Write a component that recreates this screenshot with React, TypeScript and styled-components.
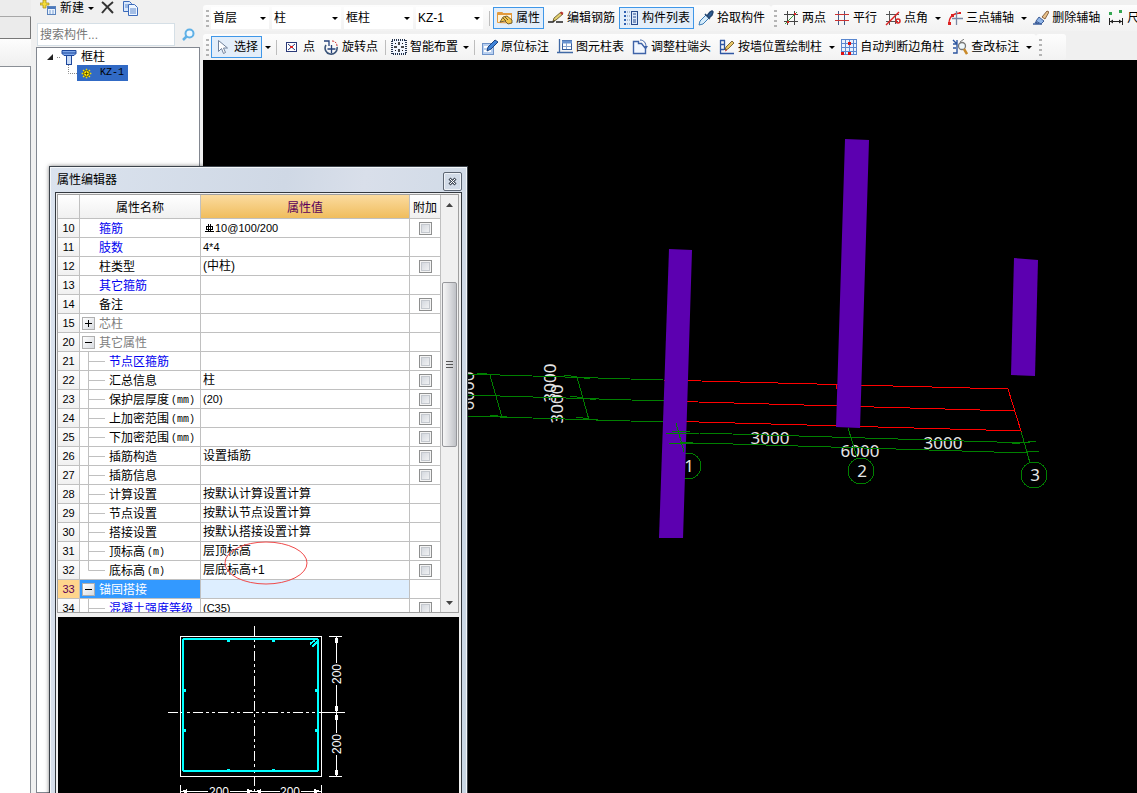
import React, { useState } from "react";
import styled, { createGlobalStyle, css } from "styled-components";

const Global = createGlobalStyle`
  * { box-sizing: border-box; }
  body { margin: 0; background: #f0f0f0; }
  button, input, select {
    font: inherit; color: inherit; margin: 0; padding: 0; border: 0; background: none;
  }
`;

/* ---------- page frame ---------- */

const Page = styled.div`
  position: relative;
  display: flex;
  height: 100vh;
  min-height: 600px;
  overflow: hidden;
  background: #f0f0f0;
  color: #000;
  font: 12px/16px "Liberation Sans", "Noto Sans CJK SC", sans-serif;
`;

const Dock = styled.div`
  display: flex;
  flex-direction: column;
  flex: none;
  width: 31px;
  margin-right: 5px;
`;

const DockTop = styled.div`
  height: 17px;
  background: #ececec;
  border-bottom: 1px solid #a8a8a8;
`;

const DockTab = styled.div`
  height: 22px;
  background: #ebebeb;
  border: solid #777;
  border-width: 0 1px 1px 0;
`;

const DockBar = styled.div`
  height: 28px;
  background: linear-gradient(#fdfdfd, #efefef);
  border-bottom: 1px solid #8a8f96;
`;

const DockBody = styled.div`
  flex: 1;
  background: #fff;
  border-right: 1px solid #8a8f96;
`;

const Sidebar = styled.aside`
  display: flex;
  flex-direction: column;
  flex: none;
  width: 164px;
  margin-right: 3px;
`;

const SideTools = styled.div`
  display: flex;
  align-items: center;
  height: 22px;
  padding: 0 4px 6px;
`;

const SideButton = styled.button`
  display: flex;
  align-items: center;
  gap: 4px;
  height: 16px;
  margin-right: 6px;
`;

const SearchRow = styled.form`
  display: flex;
  align-items: center;
  height: 25px;
  padding-left: 1px;
`;

const SearchInput = styled.input`
  flex: 1;
  min-width: 0;
  height: 23px;
  padding: 0 2px;
  background: #fff;
  border: 1px solid #d5dfe6;
  &::placeholder { color: #777; opacity: 1; }
`;

const SearchButton = styled.button`
  display: flex;
  align-items: center;
  justify-content: center;
  width: 25px;
  height: 23px;
`;

const Tree = styled.ul`
  flex: 1;
  margin: 0;
  padding: 1px 0 0 10px;
  list-style: none;
  background: #fff;
  border: 1px solid #828790;
`;

const TreeRow = styled.li<{ $child?: boolean }>`
  display: flex;
  align-items: center;
  height: 16px;
  padding-left: ${(p) => (p.$child ? 20 : 0)}px;
`;

const TreeLabel = styled.span`
  margin-left: 4px;
`;

const TreeSelected = styled.span`
  display: flex;
  align-items: center;
  gap: 8px;
  height: 16px;
  padding: 0 4px;
  background: #316ac5;
  font: 10px/16px "Liberation Mono", monospace;
`;

/* ---------- toolbars ---------- */

const Main = styled.main`
  display: flex;
  flex-direction: column;
  flex: 1;
  min-width: 0;
`;

const Toolbars = styled.div`
  display: flex;
  flex-direction: column;
  gap: 3px;
  height: 60px;
  padding-top: 5px;
  overflow: hidden;
`;

const Bar = styled.div`
  display: flex;
  height: 26px;
`;

const Group = styled.div<{ $fill?: boolean }>`
  display: flex;
  align-items: center;
  flex: ${(p) => (p.$fill ? "1 0 auto" : "none")};
  padding: 0 2px 0 1px;
  border-radius: 3px;
  background: linear-gradient(#fdfdfd, #f2f2f2);
`;

const EmptyGroup = styled.span`
  width: 20px;
`;

const Grip = styled.span`
  flex: none;
  width: 3px;
  height: 17px;
  margin: 0 2px;
  background: repeating-linear-gradient(#b4b4b4 0 2px, transparent 2px 5px);
`;

const Separator = styled.span`
  flex: none;
  width: 1px;
  height: 15px;
  margin: 0 3px;
  background: #bdbdbd;
`;

const ComboBox = styled.label<{ $width: number }>`
  display: flex;
  align-items: center;
  width: ${(p) => p.$width}px;
  height: 22px;
  margin-right: 3px;
  padding: 0 3px 0 2px;
  background: #fff;
`;

const ComboSelect = styled.select`
  flex: 1;
  min-width: 0;
  appearance: none;
  outline: 0;
`;

const Tool = styled.button<{ $active?: boolean; $tight?: boolean }>`
  display: flex;
  align-items: center;
  gap: 3px;
  flex: none;
  height: 22px;
  padding: 0 ${(p) => (p.$tight ? 1 : 3)}px;
  border: 1px solid transparent;
  white-space: nowrap;
  ${(p) =>
    p.$active &&
    css`
      border-color: #3f97e8;
      background: #e3eefa;
    `}
`;

const MenuArrow = styled.button`
  display: flex;
  align-items: center;
  justify-content: center;
  flex: none;
  width: 11px;
  height: 22px;
`;

const Caret = () => (
  <svg width="6" height="3" viewBox="0 0 6 3" aria-hidden="true">
    <path d="M0 0h6L3 3z" fill="#000" />
  </svg>
);

/* ---------- icons ---------- */

const shapes: Record<string, React.ReactNode> = {
  newItem: (
    <>
      <path d="M3 0h3v3h3v2H6v3H3V5H0V3h3z" fill="#f4dc3c" stroke="#a58a12" strokeWidth=".7" />
      <rect x="7.500" y="6.500" width="8" height="8" fill="#e9f2fd" stroke="#5a83bd" />
      <path d="M8 8h7" stroke="#4c79bd" strokeWidth="2" />
      <path d="M9 11h6M9 13h6" stroke="#7fa2d4" strokeDasharray="2 1" />
    </>
  ),
  remove: <path d="M2 2c4 3 8 8 11 11M13 2C9 5 5 9 2 13" stroke="#333" strokeWidth="2" fill="none" />,
  copy: (
    <>
      <path d="M1.500 1.500h6l2 2v8h-8z" fill="#d9e8fb" stroke="#3c6bbb" />
      <path d="M6.500 4.500h6l3 3v8h-9z" fill="#edf5ff" stroke="#3c6bbb" />
      <path d="M8 9h6M8 11h6M8 13h6M3 5h3M3 7h3" stroke="#5a86cb" />
    </>
  ),
  search: (
    <>
      <circle cx="9.500" cy="6.500" r="4" fill="#eef8ff" stroke="#5fb0e6" strokeWidth="2" />
      <path d="M6.500 9.500L3 13" stroke="#5fb0e6" strokeWidth="2.500" />
    </>
  ),
  column: (
    <>
      <path d="M1 1.500h14v3l-2 2H3l-2-2z" fill="#7da7ea" stroke="#1d479c" />
      <path d="M1 4h14" stroke="#1d479c" />
      <rect x="5.500" y="6.500" width="5" height="9" fill="#c9dcf8" stroke="#1d479c" />
    </>
  ),
  gear: (
    <>
      <path d="M8 1v14M1 8h14M3 3l10 10M13 3L3 13" stroke="#ffe600" strokeWidth="2" />
      <circle cx="8" cy="8" r="4.500" fill="#ffe600" stroke="#3a3000" />
      <path d="M8 5v6M5 8h6" stroke="#3a3000" />
    </>
  ),
  property: (
    <>
      <path d="M.500 12.500v-10h5l1 1.500h8v9z" fill="#fff3d9" stroke="#e39a3d" />
      <path d="M1 4h14" stroke="#e39a3d" strokeWidth="2" />
      <path d="M3 12l3-5 4-1 5 4v3l-4 1-3-3z" fill="#f3c64d" stroke="#54421a" strokeWidth=".8" />
      <path d="M6 8l3 3M8 7l3 3" stroke="#54421a" strokeWidth=".8" />
    </>
  ),
  pencilBar: (
    <>
      <path d="M0 12h5l2-2M8 12h7" stroke="#222" strokeWidth="1.500" fill="none" />
      <path d="M5 11l1-3 7-6 2 2-7 6z" fill="#e2cf6f" stroke="#5b4b20" strokeWidth=".8" />
      <path d="M12 3l1.500-1.500L15.500 3 14 5z" fill="#b33" />
    </>
  ),
  list: (
    <>
      <path d="M1 2h2M1 6h2M1 10h2M1 14h2" stroke="#2f5fb0" strokeWidth="2" />
      <path d="M4 2h3M4 6h3M4 10h3M4 14h3" stroke="#7a8ba6" strokeDasharray="1 1" />
      <rect x="8.500" y="1.500" width="6" height="13" fill="#dbe8fa" stroke="#274b8e" />
      <path d="M10 4h3M10 7h3M10 10h3M10 12h3" stroke="#274b8e" />
    </>
  ),
  dropper: (
    <>
      <path d="M1 15l1-4 6-6 3 3-6 6z" fill="#d6ecfb" stroke="#3c7cb5" />
      <path d="M7 4l5 5M9 6l3-4 2-1 1 1-1 3-3 3z" fill="#2f6299" stroke="#24456f" strokeWidth="1.500" />
    </>
  ),
  twoPoint: (
    <>
      <path d="M4.500 1v14M11.500 1v14M1 4.500h14M1 11.500h14" stroke="#444" />
      <path d="M2 14L14 2" stroke="#3aa03a" />
      <path d="M11 3h2v2h-2zM4 11h2v2H4z" fill="#d22" />
    </>
  ),
  parallel: (
    <>
      <path d="M4.500 1v14M10.500 1v14" stroke="#455a86" />
      <path d="M1 4.500h14M1 10.500h14" stroke="#c33" strokeWidth="1.200" />
    </>
  ),
  pointAngle: (
    <>
      <path d="M4.500 1v14M1 4.500h13M1 11.500h12M10.500 6v8" stroke="#555" />
      <path d="M1 15L14 2" stroke="#d22" strokeWidth="1.400" />
      <circle cx="13" cy="11" r="2" fill="none" stroke="#d22" strokeWidth="1.500" />
    </>
  ),
  threePoint: (
    <>
      <path d="M2 14C2 7 6 3 14 3" stroke="#d22" fill="none" strokeWidth="1.300" />
      <path d="M9.500 1v14M5 8.500h11" stroke="#7a87a3" strokeWidth="1.300" />
      <path d="M1 12h3v3H1zM4 4h3v3H4zM12 2h2v2h-2z" fill="#d22" />
    </>
  ),
  brush: (
    <>
      <path d="M9 7l5-6 2 1-4 7z" fill="#e9c28b" stroke="#6d4420" strokeWidth=".8" />
      <path d="M6 7l5 4-3 3-5-3z" fill="#8fb5e8" stroke="#1d3f7c" strokeWidth=".8" />
      <path d="M0 14h9M2 12l4 2" stroke="#3c5f9c" strokeWidth="1.500" />
    </>
  ),
  measure: (
    <>
      <path d="M1 2h3v3H1zM11 0h3v3h-3z" fill="#34a853" />
      <path d="M1.500 8v7M14.500 8v7M2 11.500h12" stroke="#222" />
      <path d="M2 11.500l3-2v4zM14 11.500l-3-2v4z" fill="#222" />
    </>
  ),
  cursor: <path d="M3.500 1.500v11l3-3 2 5 2-1-2-4.500h4z" fill="#fff" stroke="#70819b" />,
  point: (
    <>
      <rect x="2.500" y="3.500" width="10" height="9" fill="#fff" stroke="#2b3a78" />
      <path d="M4 5l7 6M11 5l-7 6" stroke="#2b3a78" />
      <path d="M6 7h3v2H6z" fill="#d22" />
    </>
  ),
  rotate: (
    <>
      <path d="M3 6a6 6 0 1 0 11 2" stroke="#3b5479" strokeWidth="1.600" fill="none" />
      <path d="M1 2h5v5M8.500 6v8M4.500 10h8" stroke="#24407a" strokeWidth="1.300" fill="none" />
      <path d="M9 2c3 0 5 2 5 5" stroke="#c33" strokeDasharray="2 1" fill="none" />
    </>
  ),
  smart: (
    <>
      <rect x="1" y="1" width="14" height="14" fill="#f1f6ff" stroke="#24344f" strokeWidth="2" strokeDasharray="1 1" />
      <path d="M8 3v3M8 10v3M3 8h3M10 8h3" stroke="#111" strokeWidth="1.500" />
      <path d="M4 4h1v1H4zM11 4h1v1h-1zM4 11h1v1H4zM11 11h1v1h-1z" fill="#111" />
    </>
  ),
  note: (
    <>
      <rect x=".500" y="4.500" width="11" height="11" fill="#b9d0f0" stroke="#6f93c8" />
      <path d="M2 8h4M2 12h7" stroke="#fff" strokeWidth="2" />
      <path d="M5 12l1-4 7-7 3 2-7 7z" fill="#3f83d8" stroke="#1c427f" />
    </>
  ),
  chart: (
    <>
      <path d="M2.500 0v13M0 13.500h16" stroke="#4069a5" strokeWidth="1.300" />
      <rect x="5.500" y="1.500" width="9" height="9" fill="#fff" stroke="#385f9c" />
      <path d="M5 3h10" stroke="#6a94d0" strokeWidth="3" />
      <path d="M6 7.500h8M9.500 4v6" stroke="#8aa5cf" />
    </>
  ),
  adjust: (
    <>
      <path d="M1.500 2.500v12h12v-5l-4-5h-3v-2z" fill="#f2f7ff" stroke="#3f63a8" strokeWidth="1.400" />
      <path d="M8 1c4 0 6 3 6 7" stroke="#3f63a8" fill="none" />
      <path d="M12 7h4l-2 3z" fill="#3f63a8" />
    </>
  ),
  wall: (
    <>
      <path d="M1.500 1v14M5.500 1v10M1 1.500h5M1 5.500h4M1 10.500h4M1 14.500h14" stroke="#2f56a3" strokeWidth="1.300" />
      <path d="M6 11l1-3 6-6 2 2-6 6z" fill="#e8c766" stroke="#624a1a" strokeWidth=".8" />
      <path d="M6 12l2-1" stroke="#c33" />
    </>
  ),
  autoGrid: (
    <>
      <rect x=".500" y=".500" width="15" height="15" fill="#e8f1ff" stroke="#5a87cf" />
      <path d="M4.500 0v16M8.500 0v16M12.500 0v16M0 4.500h16M0 8.500h16M0 12.500h16" stroke="#5a87cf" />
      <path d="M7 3h3v3H7zM0 13h3v3H0zM7 13h3v3H7z" fill="#d11" />
    </>
  ),
  inspect: (
    <>
      <path d="M1 1l4 4M1 5h4V1M5 5v9H1M1 9h3" stroke="#2c55a0" strokeWidth="1.400" fill="none" />
      <circle cx="10" cy="7" r="3.500" fill="#eef7fb" stroke="#777" strokeWidth="1.300" />
      <path d="M12 10l3 5" stroke="#c98a2a" strokeWidth="2.500" />
      <path d="M8 3l4-3" stroke="#777" />
    </>
  ),
};

const Icon = ({ name, size = 16 }: { name: string; size?: number }) => (
  <svg width={size} height={size} viewBox="0 0 16 16" fill="none" aria-hidden="true">
    {shapes[name]}
  </svg>
);

const Combo = ({ label, value, width }: { label: string; value: string; width: number }) => (
  <ComboBox $width={width}>
    <ComboSelect aria-label={label} defaultValue={value}>
      <option>{value}</option>
    </ComboSelect>
    <Caret />
  </ComboBox>
);

type ToolSpec = { icon: string; text: string; active?: boolean; tight?: boolean; menu?: boolean };

const ToolItem = ({ icon, text, active, tight, menu }: ToolSpec) => (
  <>
    <Tool type="button" $active={active} $tight={tight}>
      <Icon name={icon} />
      {text}
    </Tool>
    {menu && (
      <MenuArrow type="button" aria-label={text}>
        <Caret />
      </MenuArrow>
    )}
  </>
);

/* ---------- 3D view ---------- */

const Viewport = styled.section`
  flex: 1;
  min-height: 0;
  background: #000;
`;

const Drawing = styled.svg`
  display: block;
  width: 100%;
  height: 100%;
`;

const AxisText = styled.text`
  font: 17px "Noto Sans", sans-serif;
  fill: #e6e6e6;
  text-anchor: middle;
`;

const axes = [
  { n: 1, x: 688, y: 466 },
  { n: 2, x: 861, y: 471 },
  { n: 3, x: 1034, y: 475 },
];

const Scene = () => (
  <Drawing role="img" aria-label="3D">
    <g transform="translate(-203 -60)">
      <AxisText transform="translate(556 383) rotate(-90)">3000</AxisText>
      <AxisText transform="translate(563 404) rotate(-90)">3000</AxisText>
      <AxisText transform="translate(474 391) rotate(-90)">6000</AxisText>
      <AxisText x="770" y="444">3000</AxisText>
      <AxisText x="860" y="457">6000</AxisText>
      <AxisText x="943" y="449">3000</AxisText>
      <g stroke="#008000" fill="none" shapeRendering="crispEdges">
        <path d="M467 374L663 380M467 395L664 401M467 416L663 422M490 375L502 417M577 377L589 420" />
        <path d="M477 373l20 2M564 375l26 4M570 396l26 4M576 417l26 4M490 415l25 3" />
        {axes.map((a) => (
          <circle key={a.n} cx={a.x} cy={a.y} r="13" />
        ))}
        <path d="M848 428L857 457M1021 431L1030 463" />
      </g>
      <g stroke="#f00" fill="none" shapeRendering="crispEdges">
        <path d="M663 380L1008 389L1021 431L663 421M663 401L1015 411M836 384v5" />
      </g>
      {axes.map((a) => (
        <AxisText key={a.n} x={a.x + 1} y={a.y + 6}>{a.n}</AxisText>
      ))}
      <g fill="#5c00b0">
        <path d="M669 249L692 250L683 538L659 538z" />
        <path d="M845 139L869 140L860 428L836 427z" />
        <path d="M1014 258L1038 260L1035 376L1011 375z" />
      </g>
      <g stroke="#008000" fill="none" shapeRendering="crispEdges">
        <path d="M666 433H699L1030 443M669 443H700L1027 453M676 423L684 452" />
        <path d="M672 432l18-1M680 442h13M839 438l24-1M1012 444l24-3M1015 453l24-2" />
      </g>
    </g>
  </Drawing>
);

/* ---------- property editor ---------- */

const Dialog = styled.section`
  position: absolute;
  left: 49px;
  top: 166px;
  bottom: -8px;
  display: flex;
  flex-direction: column;
  width: 419px;
  padding: 0 5px;
  border: 1px solid #3c434b;
  background: linear-gradient(100deg, #dbe3ee, #cfd8e5 45%, #d9dfea 60%, #c8d6e4);
  box-shadow: inset 0 0 0 1px #f4f7fa, 0 0 4px rgba(0, 0, 0, 0.5);
`;

const TitleBar = styled.header`
  display: flex;
  align-items: center;
  justify-content: space-between;
  flex: none;
  height: 25px;
  padding-left: 2px;
`;

const Title = styled.h1`
  margin: 0;
  font-size: 12px;
  line-height: 16px;
  font-weight: 400;
`;

const CloseButton = styled.button`
  display: flex;
  align-items: center;
  justify-content: center;
  width: 19px;
  height: 19px;
  margin-top: 3px;
  border: 1px solid #5d6673;
  border-radius: 2px;
  box-shadow: inset 0 0 0 1px #eef2f7;
`;

const DialogBody = styled.div`
  display: flex;
  flex-direction: column;
  flex: 1;
  padding: 1px;
  border: 1px solid #33383e;
  border-bottom: 0;
  background: #f0f0f0;
`;

const GridPanel = styled.div`
  display: grid;
  grid-template-columns: 1fr 17px;
  flex: none;
  height: 419px;
  margin-right: 1px;
  overflow: hidden;
  border: 1px solid #a0a0a0;
  background: #fff;
`;

const GridClip = styled.div`
  min-width: 0;
  overflow: hidden;
`;

const PropTable = styled.table`
  width: 100%;
  table-layout: fixed;
  border-collapse: separate;
  border-spacing: 0;
`;

const HeadCell = styled.th<{ $current?: boolean }>`
  height: 24px;
  padding: 2px 0 0;
  border: solid #c0c0c0;
  border-width: 0 1px 1px 0;
  font-weight: 400;
  color: ${(p) => (p.$current ? "#5a005a" : "#000")};
  background: ${(p) =>
    p.$current ? "linear-gradient(#fbdb9f, #f0bd5d)" : "linear-gradient(#fff, #f0f0f0)"};
`;

const Cell = styled.td`
  height: 19px;
  padding: 0;
  border: solid #c0c0c0;
  border-width: 0 1px 1px 0;
  line-height: 18px;
  white-space: nowrap;
  overflow: hidden;
`;

const NumberCell = styled(Cell)<{ $current?: boolean }>`
  font-size: 11px;
  text-align: center;
  color: ${(p) => (p.$current ? "#5a005a" : "#000")};
  background: ${(p) => (p.$current ? "#ffd58c" : "linear-gradient(#fdfdfd, #f0f0f0)")};
`;

const NameCell = styled(Cell)<{ $tone: Tone; $current?: boolean }>`
  color: ${(p) => (p.$current ? "#fff" : { key: "#0000f0", plain: "#000", group: "#808080" }[p.$tone])};
  background: ${(p) => (p.$current ? "#3399ff" : "#fff")};
`;

const ValueCell = styled(Cell)<{ $current?: boolean }>`
  padding-left: 2px;
  background: ${(p) => (p.$current ? "#ddeeff" : "#fff")};
`;

const Line = styled.div`
  display: flex;
  align-items: center;
  height: 18px;
`;

const NameLine = styled(Line)<{ $indent: number }>`
  padding-left: ${(p) => p.$indent}px;
`;

const NameLabel = styled.label`
  padding-top: 2px;
`;

const Unit = styled.span`
  padding: 4px 0 0 2px;
  font: 10px/18px "Liberation Mono", monospace;
`;

const Value = styled.span`
  font: 12px/18px "Liberation Sans", "Noto Sans CJK SC", sans-serif;
`;

const Numeric = styled.span`
  font-size: 11px;
`;

const Branch = styled.svg`
  flex: none;
  margin-right: 4px;
`;

const Expander = styled.button`
  flex: none;
  width: 13px;
  height: 13px;
  margin-right: 4px;
  border: 1px solid #b0b0b0;
  background: linear-gradient(135deg, #fff, #d8dbe0);
  svg { display: block; }
`;

const Tick = styled.input`
  display: block;
  appearance: none;
  width: 13px;
  height: 13px;
  margin: 0 auto;
  border: 1px solid #8e8f8f;
  background: linear-gradient(135deg, #cdd2da, #f8f8f8);
  box-shadow: inset 0 0 0 1px #f4f4f4, inset 0 0 0 2px #c4c8ce;
`;

const ScrollBar = styled.div`
  display: flex;
  flex-direction: column;
  background: #f0f0f0;
`;

const ScrollArrow = styled.button`
  display: flex;
  align-items: center;
  justify-content: center;
  flex: none;
  height: 19px;
`;

const ScrollTrack = styled.div`
  display: flex;
  flex-direction: column;
  flex: 1;
  padding: 68px 1px 0 1px;
`;

const ScrollThumb = styled.div`
  display: flex;
  align-items: center;
  justify-content: center;
  height: 165px;
  border: 1px solid #96979b;
  border-radius: 2px;
  background: linear-gradient(90deg, #f6f6f6, #dcdde0 50%, #bfc1c6);
`;

const SectionView = styled.div`
  flex: 1;
  min-height: 0;
  margin: 4px 1px 0 1px;
  background: #000;
`;

const RedMark = styled.svg`
  position: absolute;
  left: 174px;
  top: 374px;
  pointer-events: none;
`;

type Tone = "key" | "plain" | "group";
type Prop = {
  n: number;
  name: string;
  unit?: string;
  tone?: Tone;
  depth?: 0 | 1;
  last?: boolean;
  box?: "+" | "-";
  value?: string;
  rebar?: boolean;
  tick?: boolean;
  current?: boolean;
};

const props: Prop[] = [
  { n: 10, name: "箍筋", tone: "key", value: "10@100/200", rebar: true, tick: true },
  { n: 11, name: "肢数", tone: "key", value: "4*4" },
  { n: 12, name: "柱类型", value: "(中柱)", tick: true },
  { n: 13, name: "其它箍筋", tone: "key" },
  { n: 14, name: "备注", tick: true },
  { n: 15, name: "芯柱", tone: "group", box: "+" },
  { n: 20, name: "其它属性", tone: "group", box: "-" },
  { n: 21, name: "节点区箍筋", tone: "key", depth: 1, tick: true },
  { n: 22, name: "汇总信息", depth: 1, value: "柱", tick: true },
  { n: 23, name: "保护层厚度", unit: "(mm)", depth: 1, value: "(20)", tick: true },
  { n: 24, name: "上加密范围", unit: "(mm)", depth: 1, tick: true },
  { n: 25, name: "下加密范围", unit: "(mm)", depth: 1, tick: true },
  { n: 26, name: "插筋构造", depth: 1, value: "设置插筋", tick: true },
  { n: 27, name: "插筋信息", depth: 1, tick: true },
  { n: 28, name: "计算设置", depth: 1, value: "按默认计算设置计算" },
  { n: 29, name: "节点设置", depth: 1, value: "按默认节点设置计算" },
  { n: 30, name: "搭接设置", depth: 1, value: "按默认搭接设置计算" },
  { n: 31, name: "顶标高", unit: "(m)", depth: 1, value: "层顶标高", tick: true },
  { n: 32, name: "底标高", unit: "(m)", depth: 1, last: true, value: "层底标高+1", tick: true },
  { n: 33, name: "锚固搭接", box: "-", current: true },
  { n: 34, name: "混凝土强度等级", tone: "key", depth: 1, value: "(C35)", tick: true },
];

const RebarSign = () => (
  <svg width="12" height="10" viewBox="0 0 12 10" fill="none" stroke="#000" aria-hidden="true">
    <path d="M3.500 3.500h6v3h-6zM5.500 1v8M7.500 1v8M2 8.500h9" shapeRendering="crispEdges" />
  </svg>
);

const PropRow = ({ p }: { p: Prop }) => {
  const [on, setOn] = useState(false);
  const id = `prop-${p.n}`;
  const numeric = p.value && /^[\x20-\x7e]+$/.test(p.value);
  return (
    <tr>
      <NumberCell $current={p.current}>{p.n}</NumberCell>
      <NameCell $tone={p.tone ?? "plain"} $current={p.current}>
        <NameLine $indent={p.depth ? 0 : p.box ? 2 : 19}>
          {p.depth === 1 && (
            <Branch width="25" height="19" aria-hidden="true">
              <path
                d={p.last ? "M8.500 0V9.500H25" : "M8.500 0V19M8.500 9.500H25"}
                fill="none"
                stroke="#c0c0c0"
              />
            </Branch>
          )}
          {p.box && (
            <Expander type="button" aria-label={p.name}>
              <svg width="11" height="11" aria-hidden="true">
                <path d={p.box === "+" ? "M2 5.500h7M5.500 2v7" : "M2 5.500h7"} stroke="#000" />
              </svg>
            </Expander>
          )}
          <NameLabel htmlFor={p.tick ? id : undefined}>{p.name}</NameLabel>
          {p.unit && <Unit>{p.unit}</Unit>}
        </NameLine>
      </NameCell>
      <ValueCell $current={p.current}>
        <Line>
          {p.rebar && <RebarSign />}
          {p.value && <Value>{numeric ? <Numeric>{p.value}</Numeric> : p.value}</Value>}
        </Line>
      </ValueCell>
      <Cell>
        {p.tick && <Tick id={id} type="checkbox" checked={on} onChange={() => setOn(!on)} />}
      </Cell>
    </tr>
  );
};

const DimText = styled.text`
  font: 12px "Liberation Sans", sans-serif;
  fill: #fff;
  text-anchor: middle;
`;

const Section = () => (
  <Drawing role="img" aria-label="KZ-1">
    <g transform="translate(-58 -617)" fill="none" shapeRendering="crispEdges">
      <rect x="180.500" y="636.500" width="141" height="140" stroke="#fff" />
      <path d="M254.500 626V800M168 712.500H345" stroke="#fff" strokeDasharray="10 3 3 3 3 3" />
      <rect x="183" y="639" width="135" height="132" rx="2" stroke="#0ff" strokeWidth="2" />
      <path
        d="M227 641h3M272 641h3M227 770h3M272 770h3M185 689v3M185 729v3M316 689v3M316 729v3M310 644l5-4M312 647l6-6"
        stroke="#0ff"
        strokeWidth="2"
      />
      <path
        d="M329 636.500h13M329 776.500h13M324 712.500h21M336.500 637V663M336.500 685V733M336.500 755V776M180.500 785v10M321.500 785v10M181 791.500h27M230 791.500h50M301 791.500h20"
        stroke="#fff"
      />
      <path
        d="M335 638h3v5h-3zM335 706h3v5h-3zM335 715h3v5h-3zM335 770h3v5h-3zM182 791l5-2v5zM253 791l-6-2v5zM255 791l6-2v5zM320 791l-6-2v5z"
        fill="#fff"
      />
      <DimText transform="translate(341 674) rotate(-90)">200</DimText>
      <DimText transform="translate(341 744) rotate(-90)">200</DimText>
      <DimText x="219" y="796">200</DimText>
      <DimText x="290" y="796">200</DimText>
    </g>
  </Drawing>
);

const PropertyEditor = () => (
  <Dialog aria-label="属性编辑器">
    <TitleBar>
      <Title>属性编辑器</Title>
      <CloseButton type="button" aria-label="关闭">
        <svg width="9" height="9" viewBox="0 0 9 9" aria-hidden="true">
          <path d="M1.500 1.500l6 6M7.500 1.500l-6 6" stroke="#4a5360" strokeWidth="3" />
          <path d="M2 2l5 5M7 2L2 7" stroke="#fff" strokeWidth="1" />
        </svg>
      </CloseButton>
    </TitleBar>
    <DialogBody>
      <GridPanel>
        <GridClip>
          <PropTable>
            <colgroup>
              <col width="22" />
              <col width="121" />
              <col />
              <col width="31" />
            </colgroup>
            <thead>
              <tr>
                <HeadCell />
                <HeadCell>属性名称</HeadCell>
                <HeadCell $current>属性值</HeadCell>
                <HeadCell>附加</HeadCell>
              </tr>
            </thead>
            <tbody>
              {props.map((p) => (
                <PropRow key={p.n} p={p} />
              ))}
            </tbody>
          </PropTable>
        </GridClip>
        <ScrollBar>
          <ScrollArrow type="button" aria-label="向上">
            <svg width="7" height="4" aria-hidden="true">
              <path d="M0 4L3.500 0L7 4z" fill="#444" />
            </svg>
          </ScrollArrow>
          <ScrollTrack>
            <ScrollThumb>
              <svg width="7" height="8" aria-hidden="true">
                <path d="M0 .500h7M0 3.500h7M0 6.500h7" stroke="#555" />
              </svg>
            </ScrollThumb>
          </ScrollTrack>
          <ScrollArrow type="button" aria-label="向下">
            <svg width="7" height="4" aria-hidden="true">
              <path d="M0 0L3.500 4L7 0z" fill="#444" />
            </svg>
          </ScrollArrow>
        </ScrollBar>
      </GridPanel>
      <SectionView>
        <Section />
      </SectionView>
    </DialogBody>
    <RedMark width="84" height="46" aria-hidden="true">
      <ellipse cx="42" cy="22" rx="41" ry="21" fill="none" stroke="#f04a4a" />
    </RedMark>
  </Dialog>
);

/* ---------- application ---------- */

export default function App() {
  return (
    <>
      <Global />
      <Page>
        <Dock>
          <DockTop />
          <DockTab />
          <DockBar />
          <DockBody />
        </Dock>

        <Sidebar>
          <SideTools>
            <SideButton type="button">
              <Icon name="newItem" />
              新建
              <Caret />
            </SideButton>
            <SideButton type="button" aria-label="删除">
              <Icon name="remove" />
            </SideButton>
            <SideButton type="button" aria-label="复制">
              <Icon name="copy" />
            </SideButton>
          </SideTools>
          <SearchRow onSubmit={(e) => e.preventDefault()}>
            <SearchInput aria-label="搜索构件" placeholder="搜索构件..." />
            <SearchButton type="submit" aria-label="搜索">
              <Icon name="search" />
            </SearchButton>
          </SearchRow>
          <Tree>
            <TreeRow>
              <svg width="14" height="16" aria-hidden="true">
                <path d="M6 5v6H0z" fill="#222" />
                <path d="M10 8.500h4" stroke="#888" strokeDasharray="1 1" />
              </svg>
              <Icon name="column" />
              <TreeLabel>框柱</TreeLabel>
            </TreeRow>
            <TreeRow $child>
              <svg width="10" height="16" aria-hidden="true">
                <path d="M1.500 0v8.500H10" stroke="#888" strokeDasharray="1 1" fill="none" />
              </svg>
              <TreeSelected>
                <Icon name="gear" size={11} />
                KZ-1
              </TreeSelected>
            </TreeRow>
          </Tree>
        </Sidebar>

        <Main>
          <Toolbars>
            <Bar>
              <Group>
                <Grip />
                <Combo label="楼层" value="首层" width={58} />
                <Combo label="构件类型" value="柱" width={69} />
                <Combo label="构件分类" value="框柱" width={69} />
                <Combo label="构件" value="KZ-1" width={67} />
                <Separator />
                <ToolItem icon="property" text="属性" active />
                <ToolItem icon="pencilBar" text="编辑钢筋" />
                <ToolItem icon="list" text="构件列表" active />
                <ToolItem icon="dropper" text="拾取构件" />
              </Group>
              <Group $fill>
                <Grip />
                <ToolItem icon="twoPoint" text="两点" />
                <ToolItem icon="parallel" text="平行" />
                <ToolItem icon="pointAngle" text="点角" menu />
                <ToolItem icon="threePoint" text="三点辅轴" menu />
                <ToolItem icon="brush" text="删除辅轴" />
                <ToolItem icon="measure" text="尺" />
              </Group>
            </Bar>
            <Bar>
              <Group>
                <Grip />
                <ToolItem icon="cursor" text="选择" active menu />
                <Separator />
                <ToolItem icon="point" text="点" />
                <ToolItem icon="rotate" text="旋转点" />
                <Separator />
                <ToolItem icon="smart" text="智能布置" tight menu />
                <Separator />
                <ToolItem icon="note" text="原位标注" />
                <ToolItem icon="chart" text="图元柱表" />
                <ToolItem icon="adjust" text="调整柱端头" />
                <ToolItem icon="wall" text="按墙位置绘制柱" menu />
                <ToolItem icon="autoGrid" text="自动判断边角柱" />
                <ToolItem icon="inspect" text="查改标注" menu />
              </Group>
              <Group>
                <Grip />
                <EmptyGroup />
              </Group>
            </Bar>
          </Toolbars>
          <Viewport>
            <Scene />
          </Viewport>
        </Main>

        <PropertyEditor />
      </Page>
    </>
  );
}
